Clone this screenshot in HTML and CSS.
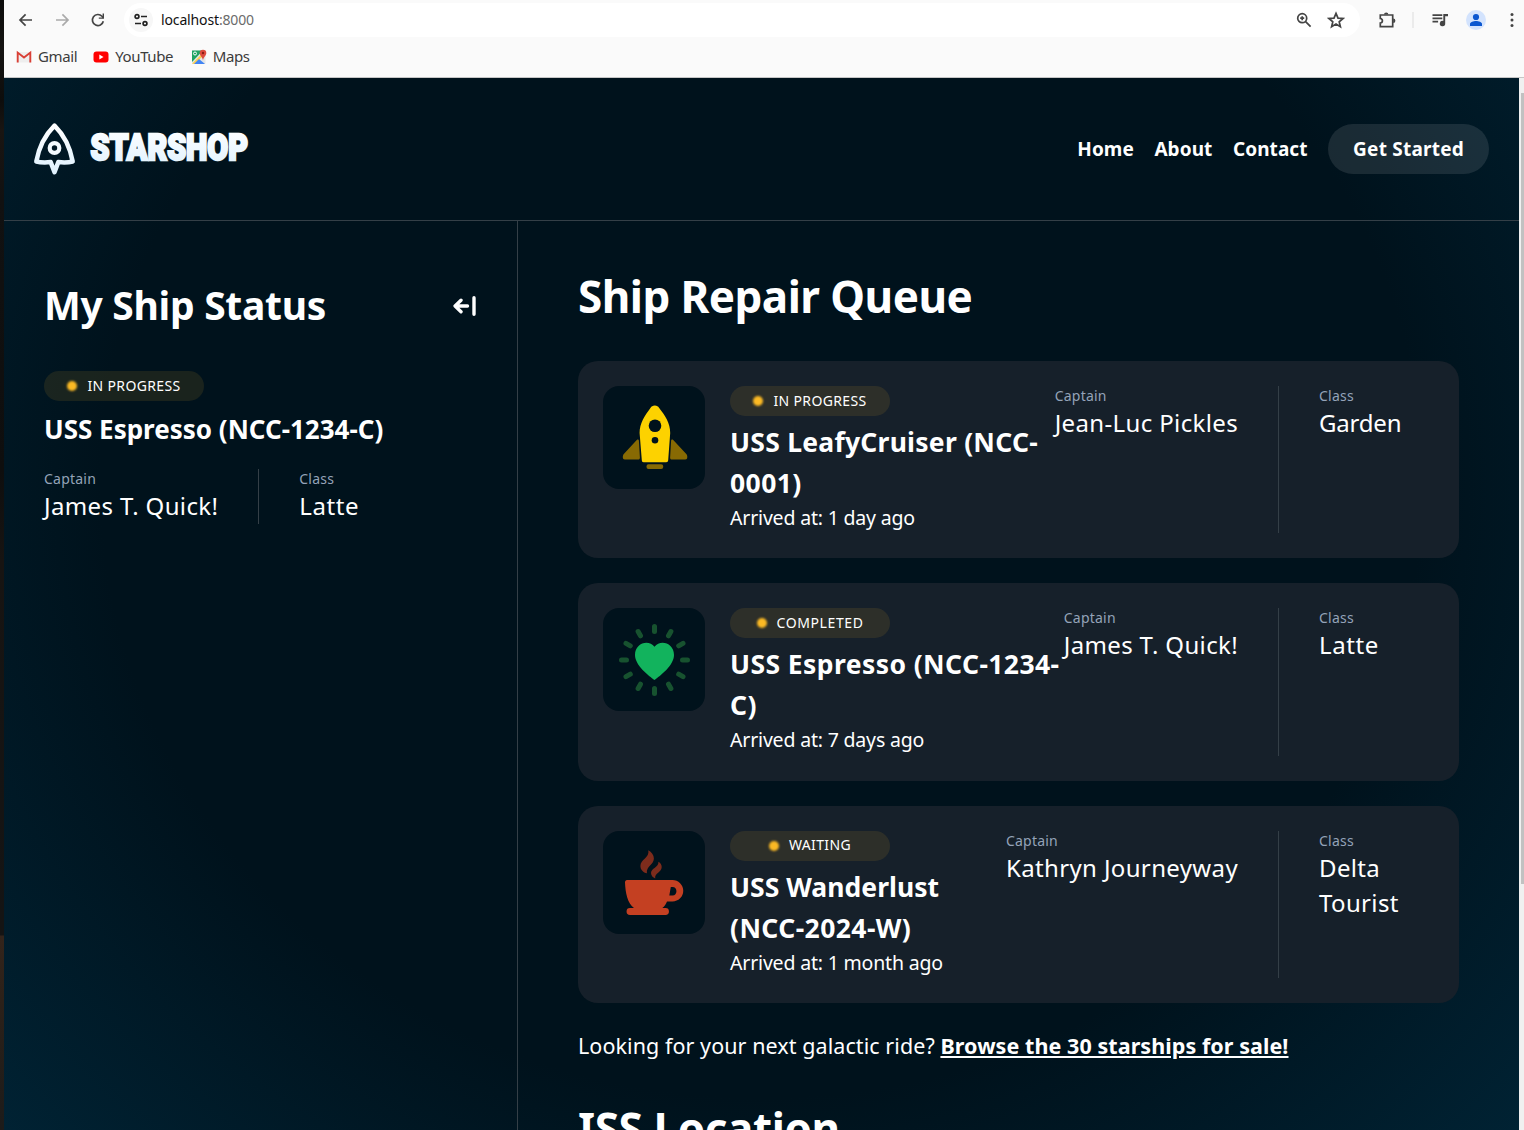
FILE: index.html
```html
<!DOCTYPE html>
<html lang="en">
<head>
<meta charset="utf-8">
<title>Starshop</title>
<link rel="stylesheet" href="styles.css">
</head>
<body>
<div class="desktop">
  <div class="backdrop"></div>
  <div class="browser">
    <div class="toolbar">
      <svg class="ic back" viewBox="0 0 16 16"><path d="M14 8H2.5M7.6 2.4 2 8l5.6 5.6"/></svg>
      <svg class="ic forward" viewBox="0 0 16 16"><path d="M2 8h11.5M8.4 2.4 14 8l-5.6 5.6"/></svg>
      <svg class="ic reload" viewBox="0 0 16 16"><path d="M13.3 9.2A5.5 5.5 0 1 1 12 4.3l1.4 1.5"/><path class="fill" d="M14 1.6v5.2H8.8V5.6h3.8v-4z"/></svg>
      <div class="address">
        <span class="siteinfo"><svg class="ic" viewBox="0 0 16 16"><circle cx="4" cy="4.5" r="1.9"/><path d="M8 4.5h6M2 11.5h6"/><circle cx="12" cy="11.5" r="1.9"/></svg></span>
        <span class="url">localhost<i>:8000</i></span>
        <svg class="ic zoomi" viewBox="0 0 16 16"><circle cx="6.2" cy="6.2" r="4.5"/><path d="M9.6 9.6l5 5M6.2 4.2v4M4.2 6.2h4"/></svg>
        <svg class="ic star" viewBox="0 0 18 18"><path d="M9 2.4l2 4.7 5 .4-3.8 3.3 1.2 5L9 13.1l-4.4 2.7 1.2-5L2 7.5l5-.4z"/></svg>
      </div>
      <svg class="ic puzzle" viewBox="0 0 18 18"><path d="M2.3 4h12.4v11.600H2.300v-3.500c2.800-.2 2.800-4.400 0-4.600z"/><path class="fill" d="M6 3.600a2.200 2.200 0 0 1 4.400 0zM15.200 7.600a2.200 2.200 0 0 1 0 4.400z"/></svg>
      <span class="sep"></span>
      <svg class="ic music" viewBox="0 0 18 16"><path d="M1.5 3.2h9.8M1.5 6.4h9.8M1.5 9.6h5.6"/><path class="fill" d="M12.3 2H17v2.2h-2.8v7.2a2.7 2.7 0 1 1-1.9-2.5z"/></svg>
      <svg class="avatar" viewBox="0 0 20 20"><circle cx="10" cy="10" r="10" fill="#d3e3fd"/><circle cx="10" cy="7" r="3.1" fill="#0b57d0"/><path d="M4 16v-2c0-2 3.500-3 6-3s6 1 6 3v2z" fill="#0b57d0"/></svg>
      <svg class="dots" viewBox="0 0 4 16"><circle cx="2" cy="2.500" r="1.500"/><circle cx="2" cy="8" r="1.500"/><circle cx="2" cy="13.500" r="1.500"/></svg>
    </div>
    <div class="bookmarks">
      <a class="bm"><svg viewBox="0 0 16 16"><path fill="#eee" d="M1 3h14v10.500H1z"/><path fill="none" stroke="#d93f35" stroke-width="1.900" d="M1.700 13.500V3.600L8 8.600l6.300-5v9.900"/></svg><span>Gmail</span></a>
      <a class="bm"><svg viewBox="0 0 16 16"><rect x=".5" y="2.500" width="15" height="11" rx="3" fill="#f00"/><path fill="#fff" d="M6.300 5.500v5l4.200-2.500z"/></svg><span>YouTube</span></a>
      <a class="bm maps"><svg viewBox="0 0 16 16"><rect x="1" y="1.500" width="13.500" height="13.500" rx="1" fill="#e4e6e7"/><path fill="#1fa463" d="M1 1.500h11L1 13z"/><path fill="#ffd04b" d="M1 14.700 11 4.800l1.500 1.800L3.500 15z"/><path fill="#4285f4" d="M3 15l5-5 6 5z"/><circle cx="4" cy="4.500" r="1.500" fill="none" stroke="#fff"/><path fill="#dd4b3e" d="M12 11.500C11.600 8 8.700 6.800 8.700 4a3.300 3.300 0 0 1 6.600 0c0 2.800-2.900 4-3.300 7.500z"/><circle cx="12" cy="4" r="1.200" fill="#8c1c14"/></svg><span>Maps</span></a>
    </div>
    <div class="viewport">
      <div class="page">
        <header class="site-header">
          <a class="logo">
            <svg width="220" height="54" viewBox="0 0 220 54">
              <defs><linearGradient id="ice" x1="0" y1="0" x2="0" y2="1"><stop offset="0" stop-color="#fff"/><stop offset="1" stop-color="#e0f2fe"/></linearGradient></defs>
              <path d="M20.500 3.600C13 11 5.300 23 2.300 39.500c4.500 1.100 9.200 1.100 14.400.6l3.800 10 3.800-10c5.200.5 9.900.5 14.400-.6C35.700 23 28 11 20.500 3.600z" fill="none" stroke="url(#ice)" stroke-width="4.500" stroke-linejoin="round"/>
              <circle cx="20.500" cy="26" r="4.800" fill="none" stroke="#f4fbff" stroke-width="4.200"/>
              <text class="wordmark" x="56.500" y="38.300" textLength="157.500" lengthAdjust="spacingAndGlyphs" fill="url(#ice)" stroke="url(#ice)">STARSHOP</text>
            </svg>
          </a>
          <nav class="nav">
            <a>Home</a><a>About</a><a>Contact</a><a class="cta">Get Started</a>
          </nav>
        </header>
        <div class="columns">
          <aside class="sidebar">
            <div class="side-head">
              <h2>My Ship Status</h2>
              <svg class="collapse" viewBox="0 0 24 20"><path d="M14.500 10H2.200M8 4.200 2.100 10 8 15.800M21 1.800v16.400"/></svg>
            </div>
            <div class="badge"><span class="dot"></span><span>IN PROGRESS</span></div>
            <h3 class="ship">USS Espresso (NCC-1234-C)</h3>
            <div class="facts">
              <div class="fact captain"><small>Captain</small><p>James T. Quick!</p></div>
              <div class="fact class"><small>Class</small><p class="loose">Latte</p></div>
            </div>
          </aside>
          <main class="main">
            <h1>Ship Repair Queue</h1>
            <div class="queue">
              <article class="card">
                <div class="thumb"><svg viewBox="0 0 102 103"><path fill="#fdd200" d="M51.800 19.500c2.200 0 3.300 1 4.200 2.200C62 29.500 67.300 37 67.200 47l-2 27c-.1 1.600-.8 2.200-2 2.200H40.600c-1.200 0-1.700-.6-1.800-2.200L36.600 47C36.500 37 42 29.500 47.600 21.700c.9-1.200 2-2.200 4.200-2.200z"/><circle cx="52" cy="39.700" r="6.300" fill="#00121c"/><circle cx="52" cy="54.300" r="3.300" fill="#00121c"/><g fill="#886a03"><path d="M34 53.700c.9-.6 1.800-.2 1.900.9l1 17.100c0 1.200-.7 1.900-2 1.900H22c-2 0-2.600-2-2-4.200.2-.9.800-1.500 1.500-2.200zM70 53.700c-.900-.6-1.800-.2-1.900.9l-1 17.100c0 1.200.7 1.900 2 1.900h13c2 0 2.600-2 2-4.200-.2-.9-.8-1.500-1.500-2.200z"/><rect x="43.500" y="78.300" width="16.700" height="4.600" rx="2"/></g></svg></div>
                <div class="info">
                  <div class="badge"><span class="dot"></span><span>IN PROGRESS</span></div>
                  <h4>USS LeafyCruiser (NCC-<br><span class="caps">0001)</span></h4>
                  <div class="arrived">Arrived at: 1 day ago</div>
                </div>
                <div class="facts">
                  <div class="fact captain"><small>Captain</small><p>Jean-Luc Pickles</p></div>
                  <div class="fact class"><small>Class</small><p class="snug">Garden</p></div>
                </div>
              </article>
              <article class="card">
                <div class="thumb"><svg viewBox="0 0 102 103"><path fill="#12b35d" d="M51.500 72C46 68 32 57.500 32 47c0-12 13.500-16 19.500-8.300C57.500 31 71 35 71 47c0 10.500-14 21-19.500 25z"/><path stroke="#17522f" stroke-width="5" stroke-linecap="round" d="M51.500 18.500v5M51.500 80.500v5M18.500 52h5M79.500 52h5M35.100 23.500l2.400 4.300M65.500 76.200l2.400 4.300M23 35.300l4.300 2.500M75.700 66.200l4.300 2.500M67.900 23.500l-2.400 4.300M37.500 76.200l-2.400 4.300M80 35.300l-4.300 2.500M27.300 66.200 23 68.700"/></svg></div>
                <div class="info">
                  <div class="badge"><span class="dot"></span><span class="loose">COMPLETED</span></div>
                  <h4><span class="caps">USS Espresso (NCC-1234-<br>C)</span></h4>
                  <div class="arrived">Arrived at: 7 days ago</div>
                </div>
                <div class="facts">
                  <div class="fact captain"><small>Captain</small><p>James T. Quick!</p></div>
                  <div class="fact class"><small>Class</small><p class="loose">Latte</p></div>
                </div>
              </article>
              <article class="card">
                <div class="thumb"><svg viewBox="0 0 102 103"><path fill="#c44022" fill-rule="evenodd" d="M24 49H69.500a10.700 10.700 0 0 1 0 21.500H64c-1.200 2.800-2.500 4.700-4.700 6.600H62.500a3.400 3.400 0 0 1 0 6.900H27a3.400 3.400 0 0 1 0-6.900h4C24.500 72 22.500 62.500 22 51.500c0-1.500.8-2.500 2-2.500zM67.800 56l-1.500 8.500h3.200c5.300 0 5.300-8.500 0-8.500z"/><path fill="#7d2c1c" d="M45.300 19.300c3.200 1.800 5.600 4.500 5.600 8.300 0 6.200-7.900 7.400-7 14.700-3.500-.6-6.500-3.700-6.500-7.400 0-6.300 9.500-8.300 7.900-15.600zM55.400 30.700c2.200 1.200 3.300 3 3.300 5.300 0 5.300-7.200 5.900-6.500 11.500-2.200-.7-4.200-2.900-4.200-5.400 0-5.300 7.900-5.500 7.400-11.400z"/></svg></div>
                <div class="info">
                  <div class="badge"><span class="dot"></span><span>WAITING</span></div>
                  <h4><span class="snug">USS Wanderlust</span><br><span class="caps">(NCC-2024-W)</span></h4>
                  <div class="arrived">Arrived at: 1 month ago</div>
                </div>
                <div class="facts">
                  <div class="fact captain"><small>Captain</small><p>Kathryn Journeyway</p></div>
                  <div class="fact class"><small>Class</small><p>Delta<br>Tourist</p></div>
                </div>
              </article>
            </div>
            <p class="browse">Looking for your next galactic ride? <a>Browse the 30 starships for sale!</a></p>
            <h1 class="iss">ISS Location</h1>
          </main>
        </div>
      </div>
      <div class="scrollbar"><div class="thumbbar"></div></div>
    </div>
  </div>
</div>
</body>
</html>
```
FILE: styles.css
```css
* { box-sizing: border-box; }
body { margin: 0; height: 1130px; overflow: hidden; font-family: "Noto Sans", sans-serif; }
h1, h2, h3, h4, p { margin: 0; }
svg { display: block; flex: none; }

.desktop { display: flex; height: 1130px; }
.backdrop { width: 4px; flex: none; background: linear-gradient(#0c0c0c 0, #151412 50px, #0d0d0c 100px, #191512 130px, #111 200px, #0e0e0e 470px, #171412 560px, #141414 935px, #33241b 936px, #2c2119 1000px, #1c1b1a 1130px); }
.browser { flex: 1; display: flex; flex-direction: column; background: #fafafa; white-space: nowrap; }

.toolbar { height: 40px; display: flex; align-items: center; padding-left: 14px; }
.ic { width: 16px; height: 16px; fill: none; stroke: #444; stroke-width: 1.7; }
.ic .fill { fill: #444; stroke: none; }
.forward { margin-left: 20px; stroke: #aaa; }
.reload { margin-left: 20px; }
.address { display: flex; align-items: center; width: 1236px; height: 34px; margin-left: 18px; padding: 0 15px 0 5px; border-radius: 17px; background: #fff; }
.siteinfo { display: grid; place-items: center; width: 24px; height: 24px; border-radius: 50%; background: #f7f7f7; }
.siteinfo .ic { stroke: #222; }
.url { margin: 0 auto 2px 8px; font-size: 14px; letter-spacing: -.14px; color: #111; }
.url i { font-style: normal; color: #6b6b6b; }
.star { width: 18px; height: 18px; margin-left: 15px; }
.puzzle { width: 18px; height: 18px; margin-left: 18px; }
.sep { width: 2px; height: 16px; margin-left: 16px; background: #ebebeb; }
.music { width: 18px; margin-left: 17px; }
.avatar { width: 20px; height: 20px; margin-left: 17px; }
.dots { width: 4px; height: 16px; margin-left: 24px; fill: #444; }

.bookmarks { height: 38px; display: flex; padding: 0 12px; gap: 16px; border-bottom: 1px solid #c6c6c6; }
.bm { display: flex; align-items: center; gap: 6px; height: 34px; font-size: 15px; letter-spacing: -.38px; color: #3c3c3c; }
.bm svg { width: 16px; height: 16px; }
.bm span { margin-bottom: 2px; }
.maps { margin-left: 1.5px; }

.viewport { flex: 1; display: flex; min-height: 0; }
.page { flex: 1; display: flex; flex-direction: column; overflow: hidden; color: #fff; background: radial-gradient(102.21% 102.21% at 50% 28.75%, #00121c 42.62%, #013954 100%) 0 0 / 100% 1410px; }
.scrollbar { width: 5px; padding: 15px 0 0 2px; background: #f0f0f0; }
.thumbbar { height: 791px; background: #c1c1c1; }

.site-header { display: flex; flex: none; justify-content: space-between; align-items: center; height: 143px; padding: 0 30px; border-bottom: 1px solid #343f47; }
.logo svg { overflow: visible; }
.wordmark { font: 900 37px Roboto, sans-serif; stroke-width: 2.6px; }
.nav { display: flex; align-items: center; gap: 20.5px; font-size: 19px; font-weight: 700; letter-spacing: .08px; }
.cta { height: 50px; padding: 0 25px; line-height: 50px; letter-spacing: .22px; border-radius: 25px; background: rgba(255, 255, 255, .1); }

.columns { flex: 1; display: flex; min-height: 0; }
.sidebar { width: 514px; flex: none; padding: 55px 40px; border-right: 1px solid #343f47; }
.side-head { display: flex; justify-content: space-between; align-items: center; height: 60px; margin-bottom: 35px; }
h2 { margin-bottom: 2px; font-size: 39px; line-height: 60px; letter-spacing: -.29px; }
.collapse { width: 24px; height: 20px; margin-bottom: 1px; fill: none; stroke: #fff; stroke-width: 3.4; stroke-linecap: round; stroke-linejoin: round; }

.badge { display: flex; justify-content: center; align-items: center; gap: 10px; width: 160px; height: 30px; border-radius: 15px; background: rgba(251, 191, 36, .1); font-size: 14px; line-height: 18px; letter-spacing: .35px; }
.badge span + span { margin-bottom: 1px; }
.badge .loose { letter-spacing: .6px; }
.dot { width: 10px; height: 10px; border-radius: 50%; background: #fbb924; filter: blur(1px); }
.ship { margin-top: 8px; font-size: 26px; line-height: 41px; }

.facts { display: flex; }
.sidebar .facts { margin-top: 19px; }
.fact small { display: block; font-size: 14px; line-height: 20px; letter-spacing: .22px; color: #94a3b8; }
.fact p { margin-top: -1px; padding-bottom: 1px; font-size: 24px; line-height: 35px; letter-spacing: .36px; }
.fact .loose { letter-spacing: .6px; }
.fact .snug { letter-spacing: -.2px; }
.captain { padding-right: 40px; border-right: 1px solid #343f47; }
.class { padding-left: 40px; }

.main { flex: 1; padding: 45px 60px 0; overflow: hidden; }
h1 { font-size: 44px; line-height: 60px; letter-spacing: -.54px; }
.queue { display: grid; gap: 25px; margin-top: 35px; }
.card { display: flex; padding: 25px; border-radius: 20px; background: #16202a; }
.thumb { width: 102px; height: 103px; margin-right: 25px; border-radius: 16px; background: #00121c; }
.info { margin-right: auto; }
h4 { margin-top: 6px; font-size: 26.5px; line-height: 41px; letter-spacing: .25px; }
h4 .caps { letter-spacing: .42px; }
h4 .snug { letter-spacing: .03px; }
.arrived { margin-top: -1px; padding-bottom: 1px; font-size: 19.5px; line-height: 29.4px; letter-spacing: -.18px; }
.card .class { width: 155px; }
.browse { margin-top: 25px; font-size: 21.5px; line-height: 36px; letter-spacing: .07px; }
.browse a { font-weight: 700; text-decoration: underline; text-decoration-thickness: 2px; text-underline-offset: 2px; }
.iss { margin-top: 34px; letter-spacing: -.4px; }
```
